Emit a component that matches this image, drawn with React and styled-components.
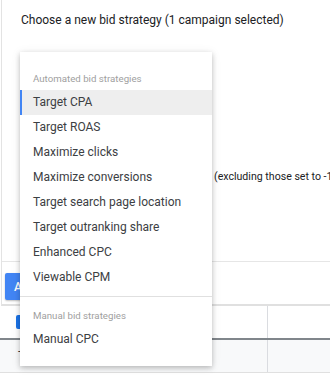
import React from 'react';
import styled, { createGlobalStyle } from 'styled-components';

const Global = createGlobalStyle`
  body {
    margin: 0;
    background: #fff;
    font-family: Roboto, "Liberation Sans", Arial, sans-serif;
    color: #3c4043;
  }
`;

const Page = styled.div`
  position: relative;
  width: 330px;
  height: 375px;
  overflow: hidden;
`;

const Panel = styled.div`
  border-left: 1px solid #e3e3e3;
  margin-left: 1px;
  border-bottom: 2px solid #e0e0e0;
`;

const Top = styled.div`
  height: 261px;
  border-bottom: 1px solid #e6e6e6;
  display: flex;
  flex-direction: column;
`;

const Title = styled.div`
  padding: 10px 0 0 19px;
  font-size: 12px;
  line-height: 20px;
  color: #202124;
  white-space: nowrap;
`;

const Note = styled.div`
  margin: 137px 0 0 212px;
  font-size: 10.6px;
  line-height: 20px;
  color: #202124;
  white-space: nowrap;
`;

const Actions = styled.div`
  height: 42px;
  padding: 11px 0 0 3px;
  box-sizing: border-box;
`;

const Apply = styled.button`
  height: 27px;
  padding: 0 10px 0 9px;
  border: none;
  border-radius: 2px;
  background: #4285f4;
  color: #fff;
  font-family: inherit;
  font-weight: 500;
  font-size: 12px;
  box-shadow: 0 1px 2px rgba(0, 0, 0, 0.25);
`;

const Table = styled.div`
  display: flex;
  flex-direction: column;
`;

const Row = styled.div`
  display: grid;
  grid-template-columns: 268px 1fr;
  height: ${(p) => p.h}px;
  background: ${(p) => (p.shade ? '#f8f9fa' : '#fff')};
  border-bottom: ${(p) => p.line};
`;

const Cell = styled.div`
  display: flex;
  align-items: center;
  padding-left: ${(p) => p.indent || 16}px;
  font-size: 12px;
  border-right: ${(p) => (p.last ? 'none' : '1px solid #dadce0')};
`;

const Check = styled.span`
  width: 14px;
  height: 14px;
  border-radius: 2px;
  background: #1a73e8;
`;

const Menu = styled.div`
  position: absolute;
  left: 20px;
  top: 52px;
  width: 192px;
  height: 314px;
  box-sizing: border-box;
  padding: 16px 0 14px;
  background: #fff;
  box-shadow: 0 2px 5px rgba(0, 0, 0, 0.22), 0 1px 10px rgba(0, 0, 0, 0.08);
`;

const GroupLabel = styled.div`
  height: 22px;
  line-height: 22px;
  padding-left: 13px;
  font-size: 9.7px;
  color: #a0a0a0;
  white-space: nowrap;
`;

const Item = styled.div`
  height: 25px;
  line-height: 25px;
  padding-left: ${(p) => (p.active ? 11 : 13)}px;
  font-size: 12px;
  color: #3c4043;
  white-space: nowrap;
  background: ${(p) => (p.active ? '#eeeeee' : 'transparent')};
  border-left: ${(p) => (p.active ? '2px solid #4285f4' : 'none')};
`;

const Divider = styled.div`
  height: 1px;
  margin: 6px 0 8px;
  background: #e0e0e0;
`;

const automated = [
  'Target CPA',
  'Target ROAS',
  'Maximize clicks',
  'Maximize conversions',
  'Target search page location',
  'Target outranking share',
  'Enhanced CPC',
  'Viewable CPM',
];

export default function App() {
  return (
    <Page>
      <Global />
      <Panel>
        <Top>
          <Title>Choose a new bid strategy (1 campaign selected)</Title>
          <Note>(excluding those set to -1)</Note>
        </Top>
        <Actions>
          <Apply>APPLY</Apply>
        </Actions>
      </Panel>
      <Table>
        <Row h={32} line="2px solid #80868b">
          <Cell>
            <Check />
          </Cell>
          <Cell last />
        </Row>
        <Row h={32} shade line="1px solid #e0e0e0">
          <Cell indent={18}>Total</Cell>
          <Cell last />
        </Row>
      </Table>
      <Menu>
        <GroupLabel>Automated bid strategies</GroupLabel>
        {automated.map((name, i) => (
          <Item key={name} active={i === 0}>
            {name}
          </Item>
        ))}
        <Divider />
        <GroupLabel>Manual bid strategies</GroupLabel>
        <Item>Manual CPC</Item>
      </Menu>
    </Page>
  );
}
